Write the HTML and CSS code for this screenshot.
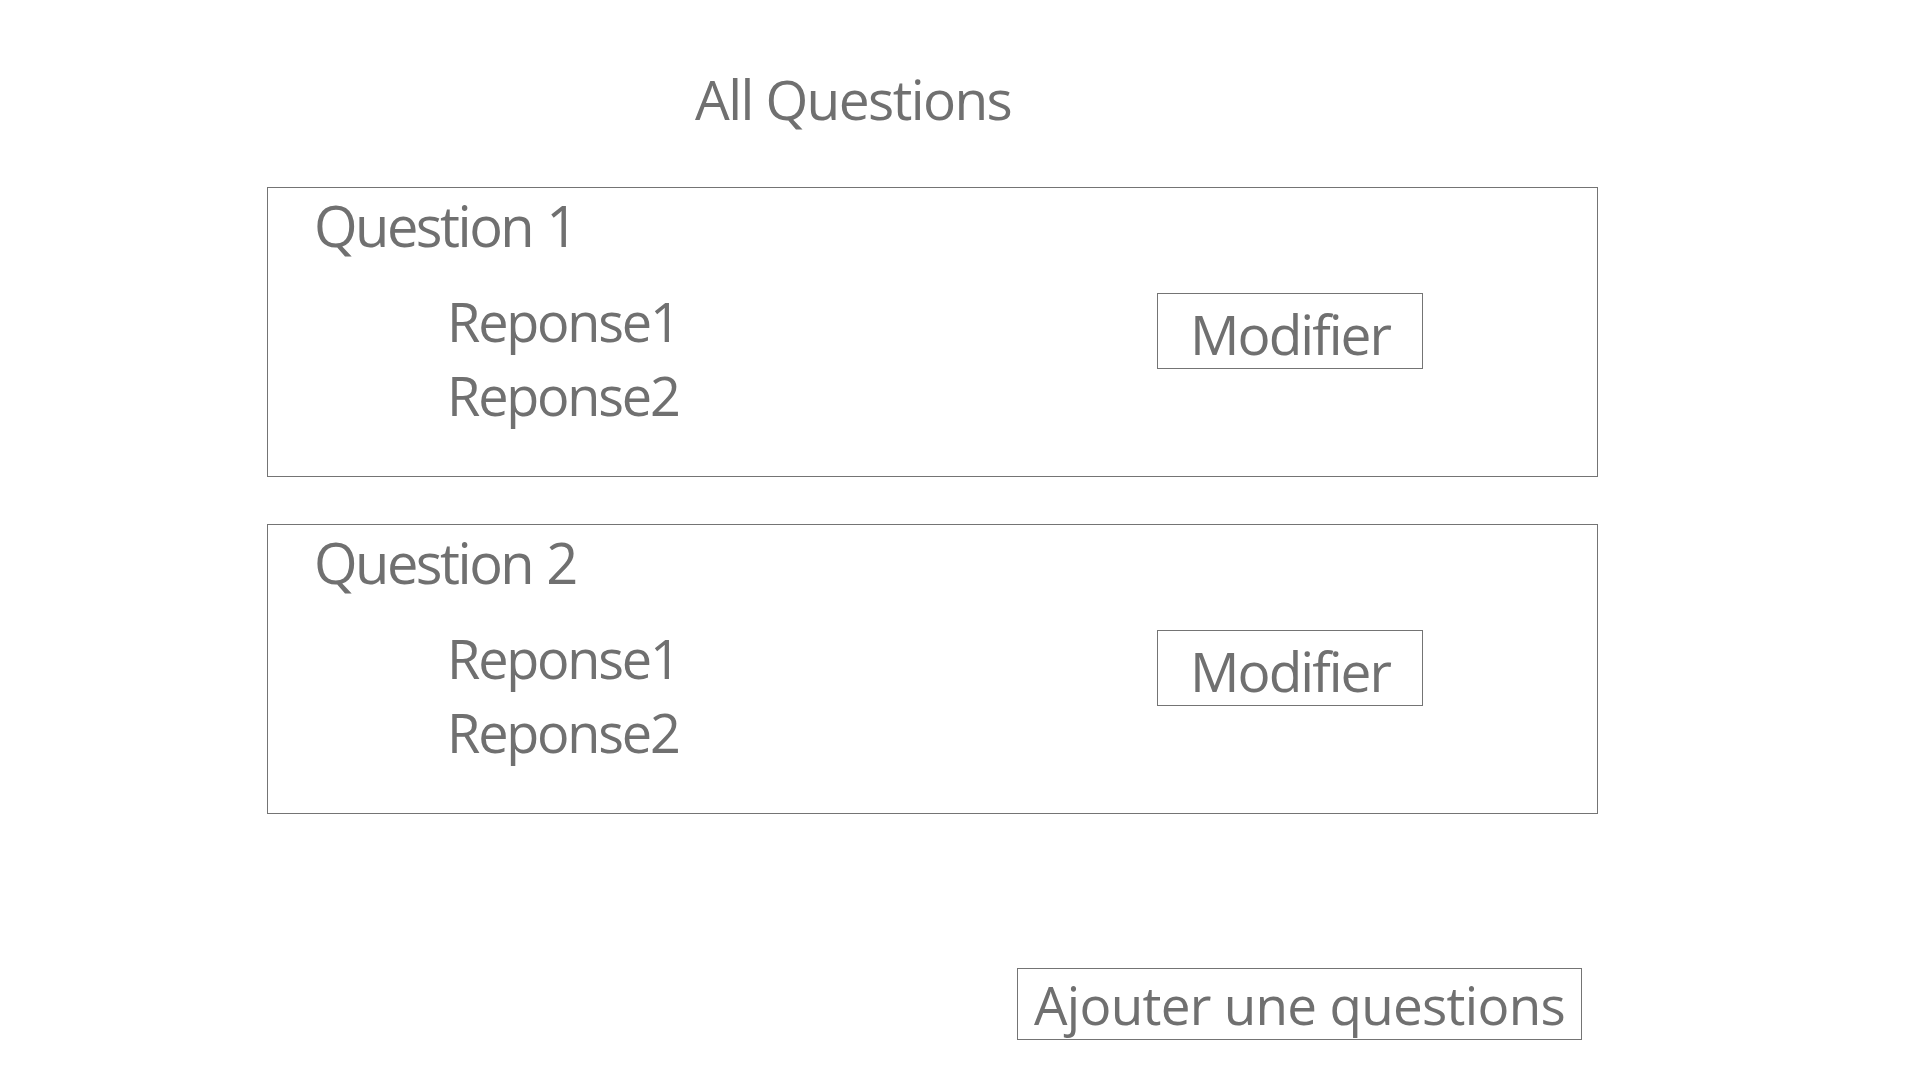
FILE: index.html
```html
<!DOCTYPE html>
<html lang="fr">
<head>
<meta charset="utf-8">
<title>All Questions</title>
<link rel="stylesheet" href="styles.css">
</head>
<body>
<main class="page">
  <h1 class="page-title">All Questions</h1>
  <section class="question-list">
    <article class="question-card">
      <div class="question-body">
        <h2 class="question-title">Question 1</h2>
        <ul class="answers">
          <li>Reponse1</li>
          <li>Reponse2</li>
        </ul>
      </div>
      <button class="btn btn-edit" type="button">Modifier</button>
    </article>
    <article class="question-card">
      <div class="question-body">
        <h2 class="question-title">Question 2</h2>
        <ul class="answers">
          <li>Reponse1</li>
          <li>Reponse2</li>
        </ul>
      </div>
      <button class="btn btn-edit" type="button">Modifier</button>
    </article>
  </section>
  <div class="actions">
    <button class="btn btn-add" type="button">Ajouter une questions</button>
  </div>
</main>
</body>
</html>
```
FILE: styles.css
```css
html, body {
  margin: 0;
  padding: 0;
  background: #ffffff;
}

body {
  font-family: "Open Sans", "Noto Sans", "Liberation Sans", sans-serif;
  color: #707070;
}

.page {
  width: 1920px;
  height: 1080px;
  overflow: hidden;
}

.page-title {
  margin: 64px 0 0 695px;
  font-size: 55px;
  line-height: 70px;
  font-weight: 400;
  letter-spacing: -1.6px;
}

.question-list {
  display: flex;
  flex-direction: column;
  gap: 47px;
  margin: 53px 0 0 267px;
  width: 1331px;
}

.question-card {
  display: flex;
  align-items: flex-start;
  border: 1px solid #747474;
  padding: 2px 0 44px 46px;
}

.question-body {
  flex: 1;
}

.question-title {
  margin: 0;
  padding-top: 1px;
  height: 69px;
  font-size: 56px;
  line-height: 69px;
  font-weight: 400;
  letter-spacing: -2.5px;
  word-spacing: 2px;
}

.answers {
  list-style: none;
  margin: 24px 0 0 133px;
  padding: 0;
  font-size: 54px;
  line-height: 74px;
  letter-spacing: -2.2px;
}

.answers li {
  padding-top: 1px;
  height: 73px;
  line-height: 73px;
}

.btn {
  box-sizing: border-box;
  background: #ffffff;
  border: 1px solid #747474;
  color: #707070;
  font-family: inherit;
  font-weight: 400;
  text-align: center;
  padding: 0;
  cursor: pointer;
}

.btn-edit {
  width: 266px;
  height: 76px;
  margin: 103px 174px 0 0;
  padding-top: 5px;
  font-size: 55px;
  line-height: 70px;
  letter-spacing: -2px;
}

.actions {
  margin: 154px 0 0 1017px;
}

.btn-add {
  width: 565px;
  height: 72px;
  padding-top: 2px;
  font-size: 53px;
  line-height: 68px;
  letter-spacing: -0.7px;
  white-space: nowrap;
}
```
